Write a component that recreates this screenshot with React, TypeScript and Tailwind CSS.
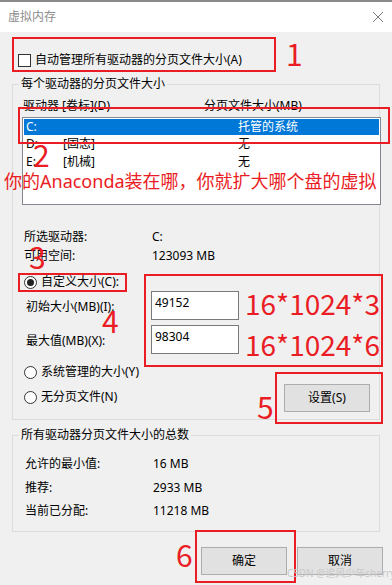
import React from "react";

const red = "border-2 border-[#ea1c24]";

const Radio = ({ on, label }: { on?: boolean; label: string }) => (
  <div className="flex items-center h-[16px]">
    <span className="w-[13px] h-[13px] rounded-full border border-[#333] bg-white flex items-center justify-center">
      {on && <span className="w-[7px] h-[7px] rounded-full bg-[#222]" />}
    </span>
    <span className="ml-[4px]">{label}</span>
  </div>
);

const Btn = ({ label }: { label: string }) => (
  <div className="w-[86px] h-[28px] bg-[#e1e1e1] border border-[#adadad] flex items-center justify-center">
    {label}
  </div>
);

const Mark = ({ n, cls }: { n: string; cls: string }) => (
  <span className={"absolute text-[30px] leading-[30px] text-[#ea1c24] font-['Noto_Sans_CJK_SC',sans-serif] " + cls}>
    {n}
  </span>
);

export default function App() {
  return (
    <div className="relative w-[392px] h-[585px] overflow-hidden bg-[#f0f0f0] text-[12px] leading-[16px] text-black font-['Noto_Sans','Noto_Sans_CJK_SC',sans-serif]">
      <div className="h-[2px] bg-[#8a8a8a]" />
      {/* title bar */}
      <div className="h-[30px] bg-white flex items-center justify-between pl-[8px] pr-[9px]">
        <span className="text-[#8c8c8c]">虚拟内存</span>
        <svg width="10" height="10" viewBox="0 0 10 10" stroke="#7a7a7a" strokeWidth="1">
          <path d="M0 0 L10 10 M10 0 L0 10" />
        </svg>
      </div>

      <div className="flex items-center h-[16px] mt-[20px] pl-[18px]">
        <span className="w-[13px] h-[13px] border border-[#333] bg-white" />
        <span className="ml-[4px]">自动管理所有驱动器的分页文件大小(A)</span>
      </div>

      {/* per-drive group */}
      <div className="relative ml-[12px] mt-[16px] w-[368px] h-[336px] border border-[#dcdcdc]">
        <span className="absolute -top-[9px] left-[6px] px-[2px] bg-[#f0f0f0]">每个驱动器的分页文件大小</span>
        <div className="flex mt-[13px] pl-[10px]">
          <span className="w-[181px]">驱动器 [卷标](D)</span>
          <span>分页文件大小(MB)</span>
        </div>
        <div className="mt-[3px] ml-[9px] w-[359px] h-[88px] bg-white border border-[#828790] p-[1px]">
          <div className="flex h-[16px] items-center bg-[#0078d7] text-white pl-[2px]">
            <span className="w-[212px]">C:</span>
            <span>托管的系统</span>
          </div>
          <div className="flex h-[18px] items-center pl-[2px]">
            <span className="w-[37px]">D:</span>
            <span className="w-[175px]">[固态]</span>
            <span>无</span>
          </div>
          <div className="flex h-[17px] items-center pl-[2px]">
            <span className="w-[37px]">E:</span>
            <span className="w-[175px]">[机械]</span>
            <span>无</span>
          </div>
        </div>
        <div className="flex mt-[24px] pl-[11px]">
          <span className="w-[128px]">所选驱动器:</span>
          <span>C:</span>
        </div>
        <div className="flex mt-[3px] pl-[11px]">
          <span className="w-[128px]">可用空间:</span>
          <span>123093 MB</span>
        </div>
        <div className="mt-[10px] pl-[11px]">
          <Radio on label="自定义大小(C):" />
        </div>
        <div className="flex items-center mt-[1px] pl-[13px]">
          <span className="w-[125px] pt-[2px]">初始大小(MB)(I):</span>
          <div className="w-[88px] h-[29px] bg-white border border-[#7a7a7a] pl-[3px] pt-[3px]">49152</div>
        </div>
        <div className="flex items-center mt-[5px] pl-[13px]">
          <span className="w-[125px] pt-[2px]">最大值(MB)(X):</span>
          <div className="w-[88px] h-[29px] bg-white border border-[#7a7a7a] pl-[3px] pt-[3px]">98304</div>
        </div>
        <div className="flex justify-between mt-[10px] pl-[11px] pr-[9px]">
          <div className="flex flex-col gap-[9px]">
            <Radio label="系统管理的大小(Y)" />
            <Radio label="无分页文件(N)" />
          </div>
          <div className="mt-[20px]">
            <Btn label="设置(S)" />
          </div>
        </div>
      </div>

      {/* totals group */}
      <div className="relative ml-[12px] mt-[15px] w-[368px] h-[97px] border border-[#dcdcdc]">
        <span className="absolute -top-[9px] left-[6px] px-[2px] bg-[#f0f0f0]">所有驱动器分页文件大小的总数</span>
        <div className="flex mt-[20px] pl-[12px]">
          <span className="w-[128px]">允许的最小值:</span>
          <span>16 MB</span>
        </div>
        <div className="flex mt-[8px] pl-[12px]">
          <span className="w-[128px]">推荐:</span>
          <span>2933 MB</span>
        </div>
        <div className="flex mt-[7px] pl-[12px]">
          <span className="w-[128px]">当前已分配:</span>
          <span>11218 MB</span>
        </div>
      </div>

      <div className="flex justify-end gap-[10px] mt-[15px] pr-[9px]">
        <Btn label="确定" />
        <Btn label="取消" />
      </div>

      {/* annotations */}
      <div className={"absolute left-[12px] top-[37px] w-[264px] h-[35px] " + red} />
      <Mark n="1" cls="left-[286px] top-[38px]" />
      <div className={"absolute left-[18px] top-[107px] w-[372px] h-[37px] " + red} />
      <Mark n="2" cls="left-[33px] top-[139px]" />
      <div className="absolute left-[4px] top-[170px] text-[18px] leading-[22px] text-[#ea1c24] whitespace-nowrap font-['Noto_Sans','Noto_Sans_CJK_SC',sans-serif]">
        你的Anaconda装在哪，你就扩大哪个盘的虚拟
      </div>
      <Mark n="3" cls="left-[29px] top-[241px]" />
      <div className={"absolute left-[18px] top-[273px] w-[109px] h-[19px] " + red} />
      <div className={"absolute left-[144px] top-[274px] w-[239px] h-[93px] " + red} />
      <Mark n="4" cls="left-[102px] top-[305px]" />
      <span className="absolute left-[245px] top-[285px] text-[28px] leading-[36px] text-[#ea1c24] font-['Noto_Sans_CJK_SC',sans-serif]">16*1024*3</span>
      <span className="absolute left-[245px] top-[326px] text-[28px] leading-[36px] text-[#ea1c24] font-['Noto_Sans_CJK_SC',sans-serif]">16*1024*6</span>
      <div className={"absolute left-[275px] top-[372px] w-[108px] h-[52px] " + red} />
      <Mark n="5" cls="left-[257px] top-[391px]" />
      <div className={"absolute left-[195px] top-[530px] w-[101px] h-[53px] " + red} />
      <Mark n="6" cls="left-[176px] top-[539px]" />
      <span className="absolute left-[287px] top-[567px] text-[10px] leading-[13px] text-[#c9c9c9] whitespace-nowrap">
        CSDN @追风少年sherry
      </span>
    </div>
  );
}
